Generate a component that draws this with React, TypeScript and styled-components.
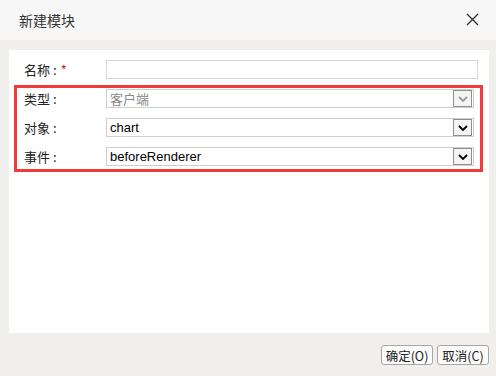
import React from 'react';
import styled, { createGlobalStyle } from 'styled-components';

const GlobalStyle = createGlobalStyle`
  html, body { margin: 0; padding: 0; }
  body {
    width: 496px;
    height: 376px;
    overflow: hidden;
    background: #f0efee;
    font-family: "Liberation Sans", "Noto Sans CJK SC", sans-serif;
  }
`;

const Dialog = styled.div`
  width: 496px;
  height: 376px;
  display: flex;
  flex-direction: column;
  background: #f0efee;
`;

const Header = styled.div`
  height: 40px;
  flex: none;
  display: flex;
  align-items: center;
  justify-content: space-between;
  padding: 0 16px 0 19px;
  background: #f7f7f7;
`;

const Title = styled.div`
  font-family: "Noto Sans CJK SC", sans-serif;
  font-size: 14px;
  color: #333;
`;

const Close = styled.button`
  width: 14px;
  height: 14px;
  padding: 0;
  border: 0;
  background: none;
  display: flex;
`;

const Body = styled.div`
  flex: 1;
  display: flex;
  flex-direction: column;
  padding: 10px 7px 10px 9px;
`;

const Panel = styled.div`
  height: 283px;
  background: #fff;
  padding: 10px 6px 0 5px;
  box-sizing: border-box;
  display: flex;
  flex-direction: column;
`;

const Row = styled.div<{ $pad?: number }>`
  display: flex;
  align-items: center;
  height: 19px;
  padding-left: ${p => p.$pad ?? 10}px;
`;

const Label = styled.div`
  width: 82px;
  flex: none;
  font-family: "Noto Sans CJK SC", sans-serif;
  font-size: 13px;
  color: #222;
`;

const Colon = styled.span`
  padding: 0 4px 0 3px;
`;

const Star = styled.span`
  color: #e02020;
`;

const Input = styled.div<{ $right: number }>`
  flex: 1;
  height: 19px;
  box-sizing: border-box;
  border: 1px solid #d6d6d6;
  margin-right: ${p => p.$right}px;
`;

const Highlight = styled.div`
  margin-top: 6px;
  border: 3px solid #f23a3a;
  padding: 1px 6px 3px 0;
  display: flex;
  flex-direction: column;
  gap: 10px;
`;

const Select = styled.div<{ $disabled?: boolean }>`
  flex: 1;
  height: 19px;
  box-sizing: border-box;
  border: 1px solid #d0cec9;
  display: flex;
  align-items: center;
  justify-content: space-between;
  padding: 0 1px 0 3px;
  font-size: 13px;
  color: ${p => (p.$disabled ? '#888' : '#000')};
`;

const Caret = styled.div<{ $disabled?: boolean }>`
  width: 19px;
  height: 17px;
  box-sizing: border-box;
  border: 1px solid #8f8f8f;
  background: #f4f4f4;
  display: flex;
  align-items: center;
  justify-content: center;
  color: ${p => (p.$disabled ? '#9a9a9a' : '#000')};
`;

const Footer = styled.div`
  flex: 1;
  display: flex;
  justify-content: flex-end;
  align-items: flex-start;
  gap: 4px;
  padding-top: 12px;
`;

const Button = styled.button`
  width: 52px;
  height: 20px;
  padding: 0;
  border: 1px solid #a6a6a6;
  border-radius: 3px;
  background: #fbfbfb;
  font-family: "Noto Sans CJK SC", sans-serif;
  font-size: 12.5px;
  color: #222;
  display: flex;
  align-items: center;
  justify-content: center;
`;

const Chevron = () => (
  <svg width="10" height="6" viewBox="0 0 10 6">
    <path d="M1 1 L5 5 L9 1" fill="none" stroke="currentColor" strokeWidth="1.8" />
  </svg>
);

const fields = [
  { label: '类型', value: '客户端', disabled: true },
  { label: '对象', value: 'chart' },
  { label: '事件', value: 'beforeRenderer' },
];

export default function App() {
  return (
    <Dialog>
      <GlobalStyle />
      <Header>
        <Title>新建模块</Title>
        <Close aria-label="close">
          <svg width="13" height="13" viewBox="0 0 13 13">
            <path d="M1 1 L12 12 M12 1 L1 12" stroke="#333" strokeWidth="1.4" />
          </svg>
        </Close>
      </Header>
      <Body>
        <Panel>
          <Row $pad={10}>
            <Label>
              名称<Colon>:</Colon>
              <Star>*</Star>
            </Label>
            <Input $right={5} />
          </Row>
          <Highlight>
            {fields.map(f => (
              <Row key={f.label} $pad={7}>
                <Label>
                  {f.label}
                  <Colon>:</Colon>
                </Label>
                <Select $disabled={f.disabled}>
                  <span>{f.value}</span>
                  <Caret $disabled={f.disabled}>
                    <Chevron />
                  </Caret>
                </Select>
              </Row>
            ))}
          </Highlight>
        </Panel>
        <Footer>
          <Button>确定(O)</Button>
          <Button>取消(C)</Button>
        </Footer>
      </Body>
    </Dialog>
  );
}
